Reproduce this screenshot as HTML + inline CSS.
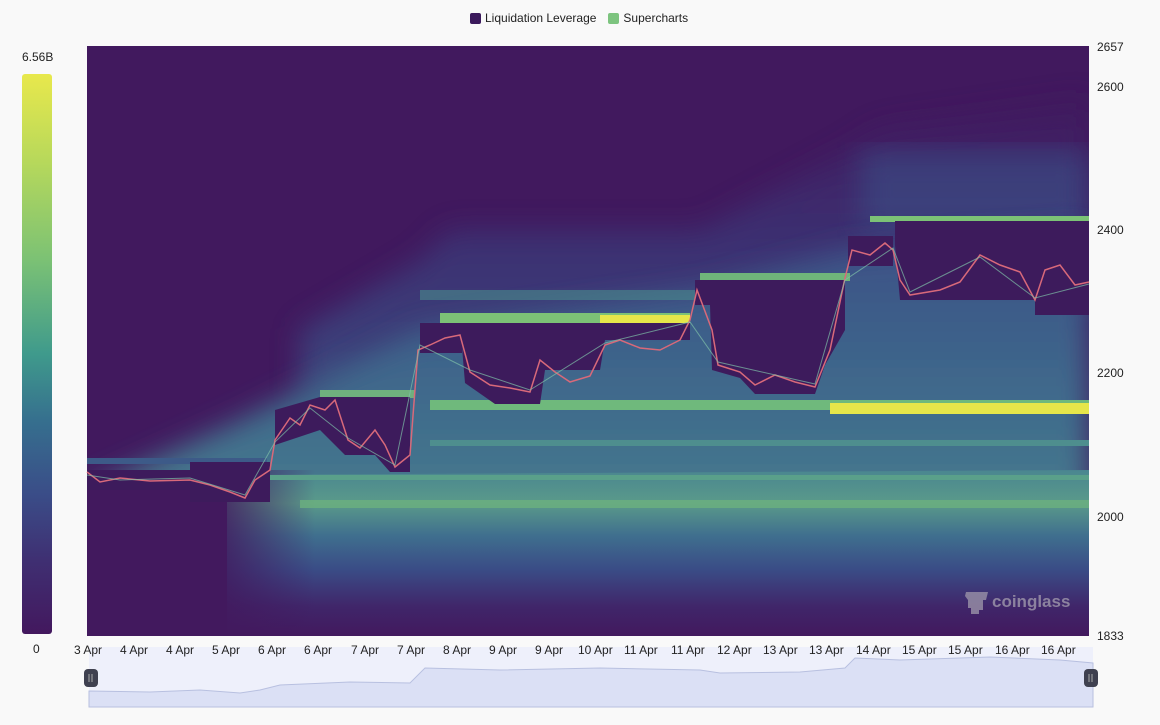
<!DOCTYPE html>
<html><head><meta charset="utf-8"><style>
html,body{margin:0;padding:0;background:#f9f9f9;width:1160px;height:725px;overflow:hidden;font-family:"Liberation Sans",sans-serif;}
.t{position:absolute;font-size:12px;color:#222;}
</style></head><body>
<div class="t" style="left:470px;top:11px;display:flex;align-items:center;gap:4px"><span style="display:inline-block;width:11px;height:11px;background:#3b1a5c;border-radius:2px"></span>Liquidation Leverage<span style="display:inline-block;width:11px;height:11px;background:#7dc47f;border-radius:2px;margin-left:8px"></span>Supercharts</div>
<div class="t" style="left:22px;top:50px">6.56B</div>
<div style="position:absolute;left:22px;top:74px;width:30px;height:560px;border-radius:3px;background:linear-gradient(#e8e84c 0%,#b9d95a 15%,#7cc274 33%,#3f9a8c 50%,#366f8e 62%,#3a4d88 75%,#3f2f72 87%,#43185e 100%)"></div>
<div class="t" style="left:33px;top:642px">0</div>
<svg width="1160" height="725" style="position:absolute;left:0;top:0" xmlns="http://www.w3.org/2000/svg">
<defs>
<linearGradient id="low" x1="0" y1="0" x2="0" y2="1">
<stop offset="0" stop-color="#4a8690"/><stop offset="0.2" stop-color="#5a9a8a"/><stop offset="0.4" stop-color="#3f6e8e"/><stop offset="0.6" stop-color="#3a4c86"/><stop offset="0.82" stop-color="#40266a"/><stop offset="1" stop-color="#42195e"/></linearGradient>
<linearGradient id="mid" x1="0" y1="0" x2="0" y2="1">
<stop offset="0" stop-color="#3d4f86"/><stop offset="0.5" stop-color="#3f6a8c"/><stop offset="1" stop-color="#4a828e"/></linearGradient>
<linearGradient id="up" x1="0" y1="0" x2="0" y2="1">
<stop offset="0" stop-color="#41195e"/><stop offset="0.5" stop-color="#3a3c7c"/><stop offset="1" stop-color="#3a5a8a"/></linearGradient>
<linearGradient id="fade" x1="0" y1="0" x2="1" y2="0">
<stop offset="0" stop-color="#42195e" stop-opacity="1"/><stop offset="1" stop-color="#42195e" stop-opacity="0"/></linearGradient>
<filter id="bl"><feGaussianBlur stdDeviation="14"/></filter>
</defs>
<rect x="87" y="46" width="1002" height="590" fill="#41195e"/>
<clipPath id="cp"><rect x="87" y="46" width="1002" height="590"/></clipPath>
<g clip-path="url(#cp)">
<polygon points="300,330 420,260 450,230 700,230 850,150 880,130 1089,100 1089,300 300,400" fill="url(#up)" opacity="0.7" filter="url(#bl)"/>
<rect x="860" y="150" width="229" height="80" fill="#3b4f86" opacity="0.6" filter="url(#bl)"/>
<polygon points="240,420 420,330 700,290 850,250 1089,230 1089,560 87,560 87,490" fill="url(#mid)" filter="url(#bl)"/>
<polygon points="220,475 1089,470 1089,636 220,636" fill="url(#low)"/>
<rect x="87" y="490" width="140" height="146" fill="#42195e"/>
<rect x="225" y="470" width="90" height="166" fill="url(#fade)" opacity="0.8"/>
</g>
<rect x="430" y="400" width="659" height="10" fill="#6fb97c"/>
<rect x="830" y="403" width="259" height="11" fill="#e6e64a"/>
<rect x="440" y="313" width="250" height="10" fill="#7cc276"/>
<rect x="600" y="315" width="90" height="8" fill="#e6e64a"/>
<rect x="700" y="273" width="150" height="8" fill="#6fb57a"/>
<rect x="870" y="216" width="219" height="6" fill="#7cc276"/>
<rect x="320" y="390" width="95" height="8" fill="#6fb07e"/>
<rect x="270" y="475" width="819" height="5" fill="#5aa08a"/>
<rect x="300" y="500" width="789" height="8" fill="#6cb07e" opacity="0.8"/>
<rect x="430" y="440" width="659" height="6" fill="#4e8e8e"/>
<rect x="87" y="458" width="180" height="6" fill="#3d5a88"/>
<rect x="420" y="290" width="280" height="10" fill="#4a8c8c" opacity="0.6"/>
<g fill="#3d1b5c">
<rect x="695" y="280" width="150" height="25"/>
<polygon points="710,305 845,305 845,330 825,365 815,394 755,394 740,378 712,370"/>
<rect x="895" y="221" width="194" height="24"/>
<polygon points="895,245 1089,245 1089,300 900,300"/>
<rect x="1035" y="260" width="54" height="55"/>
<rect x="848" y="236" width="45" height="30"/>
<polygon points="460,323 690,323 690,340 605,340 600,370 545,370 540,404 495,404 465,383"/>
<rect x="420" y="323" width="42" height="30"/>
<polygon points="320,397 410,397 410,472 390,472 375,455 345,455 320,430"/>
<polygon points="275,410 320,397 320,430 290,440 275,445"/>
<rect x="190" y="462" width="80" height="40"/>
<rect x="87" y="470" width="105" height="20"/>
</g>
<polyline fill="none" stroke="#d8697a" stroke-width="1.5" points="87,472 100,482 120,478 150,481 190,480 210,485 230,492 245,498 255,480 270,470 275,440 290,418 300,425 310,405 325,410 335,400 348,440 360,448 375,430 385,445 395,467 410,455 418,350 430,345 445,338 460,335 470,372 490,385 510,388 530,392 540,360 555,372 570,382 590,376 605,345 620,340 640,348 660,350 680,340 690,320 697,290 712,330 718,365 740,372 755,385 775,375 795,382 815,387 830,350 845,278 852,250 870,255 885,243 893,250 900,280 910,295 940,290 960,282 980,255 1000,265 1020,272 1035,300 1045,270 1060,265 1075,285 1089,282"/>
<polyline fill="none" stroke="#7fc0a8" stroke-width="1" opacity="0.7" points="87,475 120,480 190,478 245,495 275,442 310,408 348,438 395,465 420,345 470,370 530,390 605,343 690,322 718,362 815,384 845,280 893,248 910,292 980,257 1035,298 1089,284"/>
<g fill="#9a92a8" opacity="0.8"><path d="M966 592 h22 l-2 8 h-3 v10 h-4 v4 h-8 v-6 h-3 v-8 l-3 -4z"/></g>
<text x="992" y="607" font-family="Liberation Sans,sans-serif" font-weight="bold" font-size="17" fill="#9a92a8" opacity="0.85">coinglass</text>
<rect x="89" y="647" width="1004" height="60" fill="#eef0fb"/>
<path d="M89 691 L150 692 L200 690 L240 693 L260 690 L280 685 L350 682 L410 683 L425 668 L500 670 L600 668 L700 670 L720 673 L800 672 L845 668 L855 658 L900 660 L990 657 L1060 660 L1093 663 L1093 707 L89 707Z" fill="#dbe0f5" stroke="#b8c0e0" stroke-width="1"/>
<rect x="84" y="669" width="14" height="18" rx="4" fill="#3f4150"/>
<rect x="1084" y="669" width="14" height="18" rx="4" fill="#3f4150"/>
<g stroke="#aaa" stroke-width="1"><line x1="89" y1="674" x2="89" y2="682"/><line x1="92" y1="674" x2="92" y2="682"/><line x1="1089" y1="674" x2="1089" y2="682"/><line x1="1092" y1="674" x2="1092" y2="682"/></g>
<g font-family="Liberation Sans,sans-serif" font-size="12" fill="#222">
<text x="1097" y="51">2657</text><text x="1097" y="91">2600</text><text x="1097" y="234">2400</text><text x="1097" y="377">2200</text><text x="1097" y="521">2000</text><text x="1097" y="640">1833</text>
<text x="74" y="654">3 Apr</text><text x="120" y="654">4 Apr</text><text x="166" y="654">4 Apr</text><text x="212" y="654">5 Apr</text><text x="258" y="654">6 Apr</text><text x="304" y="654">6 Apr</text><text x="351" y="654">7 Apr</text><text x="397" y="654">7 Apr</text><text x="443" y="654">8 Apr</text><text x="489" y="654">9 Apr</text><text x="535" y="654">9 Apr</text><text x="578" y="654">10 Apr</text><text x="624" y="654">11 Apr</text><text x="671" y="654">11 Apr</text><text x="717" y="654">12 Apr</text><text x="763" y="654">13 Apr</text><text x="809" y="654">13 Apr</text><text x="856" y="654">14 Apr</text><text x="902" y="654">15 Apr</text><text x="948" y="654">15 Apr</text><text x="995" y="654">16 Apr</text><text x="1041" y="654">16 Apr</text>
</g>
</svg>
</body></html>
